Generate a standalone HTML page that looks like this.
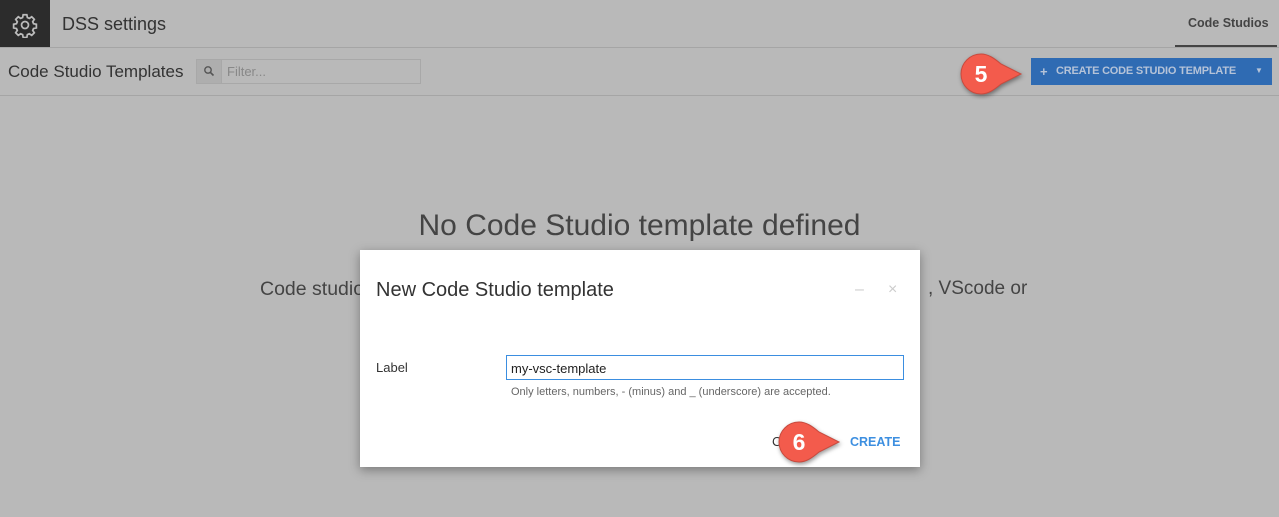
<!DOCTYPE html>
<html><head><style>
body{margin:0;width:1279px;height:517px;background:#b9b9b9;font-family:"Liberation Sans",sans-serif;position:relative;overflow:hidden}
.a{position:absolute}
</style></head><body>
<div class="a" style="left:0;top:0;width:50px;height:48px;background:#2c2c2c"></div>
<svg class="a" style="left:12px;top:12px" width="26" height="26" viewBox="0 0 24 24" fill="none" stroke="#bbb" stroke-width="1.6"><circle cx="12" cy="12" r="3.2"/><path d="M10.3 2.5h3.4l.5 2.6 1.8.8 2.2-1.5 2.4 2.4-1.5 2.2.8 1.8 2.6.5v3.4l-2.6.5-.8 1.8 1.5 2.2-2.4 2.4-2.2-1.5-1.8.8-.5 2.6h-3.4l-.5-2.6-1.8-.8-2.2 1.5-2.4-2.4 1.5-2.2-.8-1.8-2.6-.5v-3.4l2.6-.5.8-1.8-1.5-2.2 2.4-2.4 2.2 1.5 1.8-.8z"/></svg>
<div class="a" style="left:62px;top:14px;font-size:18px;color:#333">DSS settings</div>
<div class="a" style="left:1188px;top:16px;font-size:12.5px;font-weight:bold;color:#444">Code Studios</div>
<div class="a" style="left:1175px;top:45px;width:102px;height:3px;background:#444"></div>
<div class="a" style="left:0;top:47px;width:1279px;height:1px;background:#a5a5a5"></div>
<div class="a" style="left:8px;top:62px;font-size:17px;color:#333">Code Studio Templates</div>
<div class="a" style="left:196px;top:59px;width:225px;height:25px;border:1px solid #a8a8a8;box-sizing:border-box"></div>
<div class="a" style="left:197px;top:60px;width:24px;height:23px;background:#aeaeae;border-right:1px solid #a8a8a8"></div>
<svg class="a" style="left:203px;top:65px" width="12" height="12" viewBox="0 0 12 12"><circle cx="5" cy="5" r="3.2" fill="none" stroke="#555" stroke-width="1.4"/><path d="M7.3 7.3L10.5 10.5" stroke="#555" stroke-width="1.6"/></svg>
<div class="a" style="left:227px;top:64px;font-size:13px;color:#888">Filter...</div>
<div class="a" style="left:0;top:95px;width:1279px;height:1px;background:#a5a5a5"></div>
<div class="a" style="left:1031px;top:58px;width:241px;height:27px;background:#2f6bb3"></div>
<div class="a" style="left:1040px;top:64px;font-size:13px;font-weight:bold;color:#b5c3d8">+</div>
<div class="a" style="left:1056px;top:65px;font-size:11px;font-weight:bold;color:#b5c3d8;letter-spacing:-0.2px">CREATE CODE STUDIO TEMPLATE</div>
<div class="a" style="left:1255px;top:66px;font-size:8px;color:#b5c3d8">&#9660;</div>
<div class="a" style="left:0;top:209px;width:1279px;text-align:center;font-size:30px;color:#444">No Code Studio template defined</div>
<div class="a" style="left:260px;top:278px;font-size:19.5px;color:#444">Code studio</div>
<div class="a" style="left:928px;top:278px;font-size:19px;color:#444">, VScode or</div>
<div class="a" style="left:360px;top:250px;width:560px;height:217px;background:#fff;box-shadow:0 3px 10px rgba(0,0,0,.35)"></div>
<div class="a" style="left:376px;top:279px;font-size:20px;color:#333">New Code Studio template</div>
<div class="a" style="left:855px;top:281px;font-size:16px;color:#ccc">–</div>
<div class="a" style="left:888px;top:281px;font-size:16px;color:#ccc">×</div>
<div class="a" style="left:376px;top:360px;font-size:13px;color:#333">Label</div>
<div class="a" style="left:506px;top:355px;width:398px;height:25px;border:1px solid #3b8ee0;box-sizing:border-box;font-size:13px;color:#222;padding:5px 4px">my-vsc-template</div>
<div class="a" style="left:511px;top:386px;font-size:11px;color:#666">Only letters, numbers, - (minus) and _ (underscore) are accepted.</div>
<div class="a" style="left:772px;top:434px;font-size:13px;color:#333">C</div>
<div class="a" style="left:850px;top:435px;font-size:12.5px;font-weight:bold;color:#3d8fe0">CREATE</div>
<svg class="a" style="left:955px;top:50px" width="80" height="50"><path d="M26 4a20 20 0 1 0 0 40c7 0 13-4 20-10l20-10-20-10C39 8 33 4 26 4z" fill="#f35b4c" stroke="#c84a3e" style="filter:drop-shadow(1px 2px 2px rgba(0,0,0,.4))"/><text x="26" y="32" text-anchor="middle" font-family="Liberation Sans" font-weight="bold" font-size="23" fill="#fff">5</text></svg>
<svg class="a" style="left:773px;top:418px" width="80" height="50"><path d="M26 4a20 20 0 1 0 0 40c7 0 13-4 20-10l20-10-20-10C39 8 33 4 26 4z" fill="#f35b4c" stroke="#c84a3e" style="filter:drop-shadow(1px 2px 2px rgba(0,0,0,.4))"/><text x="26" y="32" text-anchor="middle" font-family="Liberation Sans" font-weight="bold" font-size="23" fill="#fff">6</text></svg>
</body></html>
